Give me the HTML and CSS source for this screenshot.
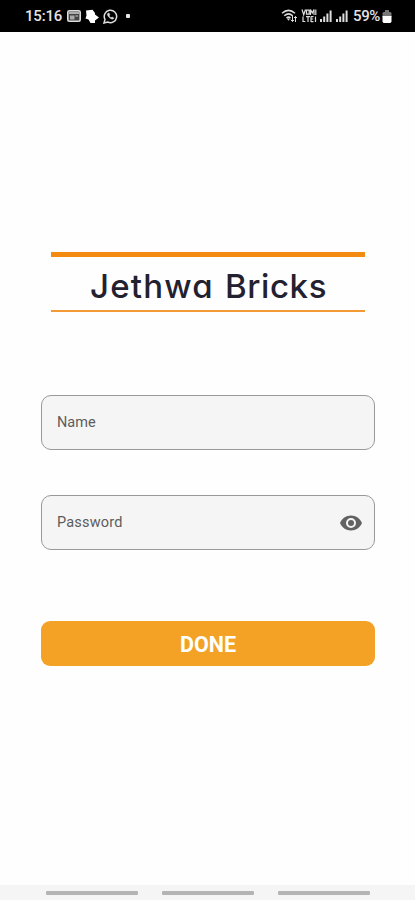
FILE: index.html
```html
<!DOCTYPE html>
<html lang="en">
<head>
<meta charset="utf-8">
<meta name="viewport" content="width=device-width">
<title>Jethwa Bricks</title>
<link rel="stylesheet" href="styles.css">
</head>
<body>
<header class="status">
  <div class="status-left">
    <span class="time">15:16</span>
    <svg class="ic-card" width="14" height="12" viewBox="0 0 14 12"><rect x=".8" y=".8" width="12.4" height="10.4" rx="1.5" fill="#444" stroke="#ddd" stroke-width="1.6"/><path d="M2 3h10" stroke="#ddd" stroke-width="1.4"/><path d="M3 5.5h4.5v4H3z" fill="#aaa"/><path d="M8.5 6H11" stroke="#ccc"/></svg>
    <svg class="ic-tag" width="14" height="15" viewBox="0 0 14 15"><path d="M1 1.500 7.500.8 10 4v1.500l4 3L10 11.500V14H5.500L3.500 10.500.500 9.500l1-3z" fill="#fff"/></svg>
    <svg class="ic-chat" width="15" height="15" viewBox="0 0 15 15" fill="none" stroke="#ddd" stroke-width="1.5"><path d="M1 14l1-3.600A6.200 6.200 0 1 1 4.700 13z"/><path d="M5 4.200c-.9.8-.5 2.500 1 4s3.600 2.500 4.500 1.500l.2-.8-1.700-.9-.9.8C7 8.300 6.400 7.500 6.100 6.700l.7-.8-.7-1.700z" fill="#ddd" stroke-width=".6"/></svg>
    <span class="dot"></span>
  </div>
  <div class="status-right">
    <svg class="ic-wifi" width="17" height="14" viewBox="0 0 17 14" fill="none" stroke="#ddd" stroke-width="1.500"><path d="M1 4.300Q7.500-1.500 14 4.300M3.300 6.800q4.200-3.800 8.400 0M5.500 9q2-1.700 4 0"/><path d="M7.500 11.800 5.800 9.500h3.400z" fill="#ddd" stroke="none"/><path d="M11.500 6.500v6M9.700 10.700l1.800 1.800 1.400-1.500M14.500 13V7.500M13 9l1.500-1.500L16 9" stroke-width="1"/></svg>
    <svg class="ic-volte" width="16" height="14" viewBox="0 0 16 14" fill="none" stroke="#ddd" stroke-width="1.200"><path d="M1 .5 2.700 5.800 4.500.5M5.500 1.200h2.700v4H5.500zM9.500 6V.5L11.300 4 13 .5V6M14.800 .5V6"/><path d="M2 7.500v5h2.300M5 7.700h4M7 7.700v5.300M10 7.500v5.500M10 7.700h2.500M10 10h2.200M10 12.700h2.500M14.500 7.500V13"/></svg>
    <svg class="ic-sig" width="12" height="12" viewBox="0 0 12 12" fill="#ddd"><path d="M0 9h2v3H0zM3.200 6.500h2V12h-2zM6.400 3.500h2V12h-2zM9.600.5h2V12h-2z"/></svg>
    <svg class="ic-sig2" width="12" height="12" viewBox="0 0 12 12" fill="#ddd"><path d="M0 9h2v3H0zM3.200 6.500h2V12h-2zM6.400 3.500h2V12h-2zM9.600.5h2V12h-2z"/></svg>
    <span class="percent">59%</span>
    <svg class="ic-bat" width="10" height="13" viewBox="0 0 10 13"><path d="M3 0h4v2h1.500L9.500 3v4h-9V3l1-1H3z" fill="#777"/><path d="M.5 6h9v5.500L8.500 13h-7l-1-1.500z" fill="#fff"/></svg>
  </div>
</header>
<main class="content">
  <h1 class="brand"><span class="brand-first">Jethwa</span><span class="brand-last">Bricks</span></h1>
  <div class="field"><span class="label-name">Name</span></div>
  <div class="field field-password">
    <span class="label-password">Password</span>
    <svg width="24" height="24" viewBox="0 0 24 24" fill="#626262"><path d="M12 4.500C7 4.500 2.730 7.610 1 12c1.730 4.390 6 7.500 11 7.500s9.270-3.110 11-7.500c-1.730-4.390-6-7.500-11-7.500zM12 17a5 5 0 1 1 0-10 5 5 0 0 1 0 10zm0-8a3 3 0 1 0 0 6 3 3 0 0 0 0-6z"/></svg>
  </div>
  <button class="done" type="button">DONE</button>
</main>
<footer class="nav"><span></span><span></span><span></span></footer>
</body>
</html>
```
FILE: styles.css
```css
* { box-sizing: border-box; }
body {
  margin: 0;
  height: 900px;
  display: flex;
  flex-direction: column;
  background: #fefefe;
  font-family: Roboto, sans-serif;
  overflow: hidden;
}
svg { display: block; flex: none; }
.status {
  height: 32px;
  flex: none;
  background: #000;
  color: #e4e4e4;
  display: flex;
  justify-content: space-between;
  padding: 0 23px 0 25px;
  font-size: 15px;
  font-weight: 500;
}
.status-left, .status-right { display: flex; align-items: center; }
.time { width: 42px; letter-spacing: -0.2px; }
.ic-tag { margin-left: 4px; }
.ic-chat { margin-left: 4px; }
.dot { width: 4px; height: 4px; margin-left: 8px; background: #e8e8e8; border-radius: 1px; }
.ic-volte { margin-left: 3px; }
.ic-sig { margin-left: 3px; }
.ic-sig2 { margin-left: 4px; }
.percent { width: 28px; margin-left: 5px; letter-spacing: -0.4px; }
.ic-bat { margin-left: 1px; }
.content {
  flex: 1;
  display: flex;
  flex-direction: column;
  padding: 220px 40px 0 41px;
}
.brand {
  margin: 0 10px 83px;
  height: 60px;
  border-top: 5px solid #f38b13;
  border-bottom: 2px solid #f39a35;
  display: flex;
  align-items: center;
  padding: 5px 0 0 39px;
  color: #232130;
  font: 500 33px/40px Inter, sans-serif;
  font-feature-settings: "cv11";
}
.brand-first { width: 135px; letter-spacing: 1.2px; }
.brand-last { letter-spacing: 0.6px; }
.field {
  height: 55px;
  margin: 0 0 45px;
  border: 1px solid #999;
  border-radius: 10px;
  background: #f5f5f5;
  display: flex;
  align-items: center;
  justify-content: space-between;
  padding: 0 11px 0 15px;
  color: #5c5c5c;
  font-size: 14.5px;
}
.label-name { letter-spacing: 0; }
.label-password { letter-spacing: 0.2px; }
.field-password { margin-bottom: 71px; }
.done {
  height: 45px;
  border: 0;
  border-radius: 9px;
  background: #f3a226;
  color: #fff;
  padding: 2px 0 0;
  font: 700 21.5px/24px Roboto, sans-serif;
}
.nav {
  height: 15px;
  flex: none;
  background: #f5f5f5;
  display: flex;
  gap: 24px;
  padding: 6px 0 0 46px;
}
.nav span { width: 92px; height: 4px; background: #b4b4b4; border-radius: 1px; }
```
